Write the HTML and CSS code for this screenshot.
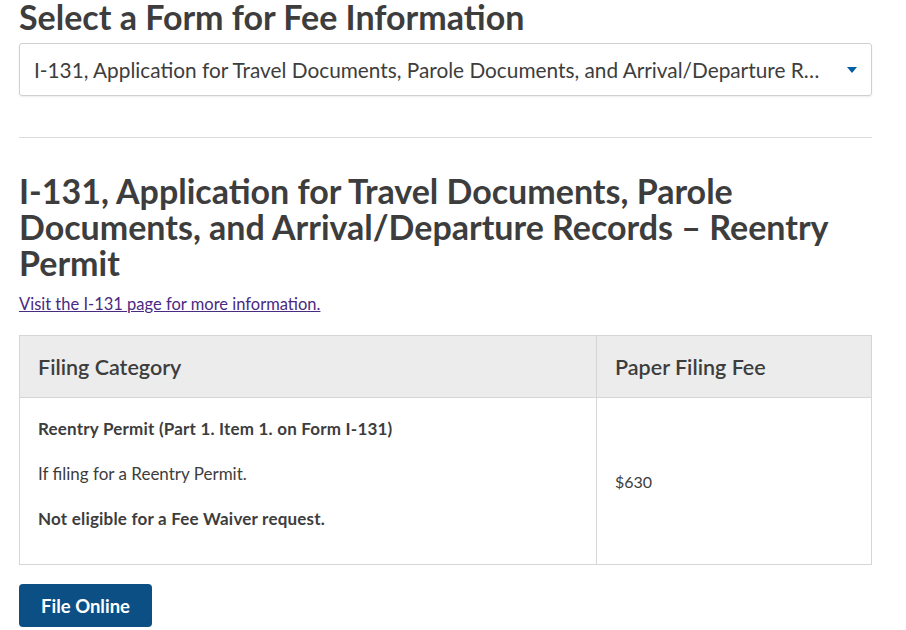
FILE: index.html
```html
<!DOCTYPE html>
<html lang="en">
<head>
<meta charset="utf-8">
<title>Fee Information</title>
<link rel="stylesheet" href="styles.css">
</head>
<body>
<main class="page">
  <h2 class="select-title">Select a Form for Fee Information</h2>
  <div class="select-box">
    <span class="select-text">I-131, Application for Travel Documents, Parole Documents, and Arrival/Departure R…</span>
    <svg class="caret" width="10" height="6" viewBox="0 0 10 6"><path d="M0 0h10L5 6z" fill="#005ea2"/></svg>
  </div>
  <hr class="divider">
  <h2 class="form-title">I-131, Application for Travel Documents, Parole Documents, and Arrival/Departure Records – Reentry Permit</h2>
  <a class="info-link" href="#">Visit the I-131 page for more information.</a>
  <table class="fee-table">
    <thead>
      <tr>
        <th class="col-cat">Filing Category</th>
        <th class="col-fee">Paper Filing Fee</th>
      </tr>
    </thead>
    <tbody>
      <tr>
        <td class="col-cat">
          <p class="strong">Reentry Permit (Part 1. Item 1. on Form I-131)</p>
          <p>If filing for a Reentry Permit.</p>
          <p class="strong">Not eligible for a Fee Waiver request.</p>
        </td>
        <td class="col-fee fee">$630</td>
      </tr>
    </tbody>
  </table>
  <a class="btn" href="#">File Online</a>
</main>
</body>
</html>
```
FILE: styles.css
```css
* { box-sizing: border-box; }
html, body { margin: 0; padding: 0; background: #fff; }
body {
  font-family: Lato, "Noto Sans", sans-serif;
  color: #3d3d3d;
}
.page {
  width: 853px;
  margin-left: 19px;
  display: flex;
  flex-direction: column;
  align-items: flex-start;
}
.select-title {
  margin: 0;
  padding-top: 1px;
  font-size: 34px;
  line-height: 31px;
  font-weight: 700;
  color: #3d3d3d;
}
.select-box {
  margin-top: 11px;
  width: 100%;
  height: 53px;
  border: 1px solid #d0d0d0;
  border-radius: 3px;
  box-shadow: 0 1px 2px rgba(0,0,0,0.08);
  display: flex;
  align-items: center;
  justify-content: space-between;
  padding: 0 14px 0 14px;
}
.select-text {
  font-size: 20.8px;
  color: #3d3d3d;
  white-space: nowrap;
}
.caret { margin-right: 0; }
.divider {
  width: 100%;
  margin: 41px 0 0 0;
  border: 0;
  border-top: 1px solid #dcdcdc;
}
.form-title {
  margin: 35px 0 0 0;
  max-width: 830px;
  font-size: 34px;
  line-height: 36px;
  font-weight: 700;
  color: #3d3d3d;
}
.info-link {
  display: block;
  margin-top: 13px;
  font-size: 16.5px;
  line-height: 20px;
  color: #4b2a82;
  text-decoration: underline;
}
.fee-table {
  margin-top: 21px;
  width: 100%;
  border-collapse: collapse;
}
.fee-table th, .fee-table td {
  border: 1px solid #d6d6d6;
  text-align: left;
  vertical-align: middle;
}
.fee-table th {
  background: #ececec;
  height: 62px;
  padding: 0 18px;
  font-size: 21.5px;
  font-weight: 600;
  color: #3d3d3d;
}
.fee-table .col-cat { width: 577px; }
.fee-table td {
  padding: 19px 18px 33px;
  font-size: 17px;
  color: #3d3d3d;
}
.fee-table td.fee { font-size: 16px; padding: 0 18px; }
.fee-table td p { margin: 0; line-height: 24px; }
.fee-table td p + p { margin-top: 21px; }
.fee-table .strong { font-weight: 700; letter-spacing: 0.2px; }
.btn {
  margin-top: 19px;
  background: #0b4f85;
  color: #fff;
  font-weight: 700;
  font-size: 18.5px;
  text-decoration: none;
  border-radius: 4px;
  width: 133px;
  height: 43px;
  display: flex;
  align-items: center;
  justify-content: center;
}
```
